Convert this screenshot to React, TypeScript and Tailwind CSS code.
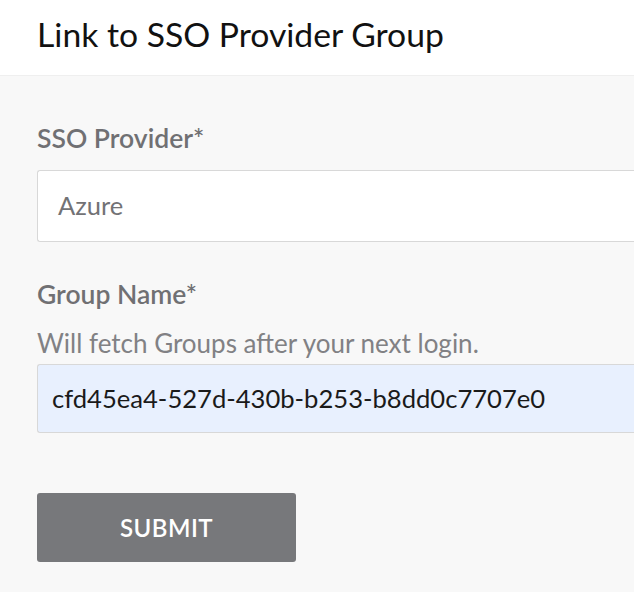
import React from "react";

export default function App() {
  return (
    <div className="min-h-[592px] w-full bg-[#f8f8f8]" style={{ fontFamily: "Lato, 'Noto Sans', sans-serif" }}>
      <div className="h-[76px] bg-white border-b border-[#efefef] pl-[37px] pt-[18px]">
        <h1 className="text-[33.7px] text-[#111] font-normal leading-none">Link to SSO Provider Group</h1>
      </div>
      <div className="pl-[37px] pt-[49px]">
        <label className="block text-[26.5px] font-semibold text-[#707073] leading-none">SSO Provider*</label>
        <div className="mt-[18px] h-[72px] bg-white border border-[#d8d8d8] rounded-[3px] border-r-0 rounded-r-none flex items-center pl-[20px]">
          <span className="text-[25.5px] text-[#727275] leading-none">Azure</span>
        </div>
        <label className="block mt-[39px] text-[26.5px] font-semibold text-[#707073] leading-none">Group Name*</label>
        <div className="mt-[23px] text-[26px] text-[#818184] leading-none">Will fetch Groups after your next login.</div>
        <div className="mt-[8px] h-[69px] bg-[#e8f0fe] border border-[#d8d8d8] rounded-[3px] border-r-0 rounded-r-none flex items-center pl-[14px]">
          <span className="text-[25.6px] text-[#1a1a1a] leading-none">cfd45ea4-527d-430b-b253-b8dd0c7707e0</span>
        </div>
        <button className="mt-[60px] w-[259px] h-[69px] bg-[#77787b] rounded-[3px] text-white text-[24px] font-semibold tracking-[0.5px]">SUBMIT</button>
      </div>
    </div>
  );
}
